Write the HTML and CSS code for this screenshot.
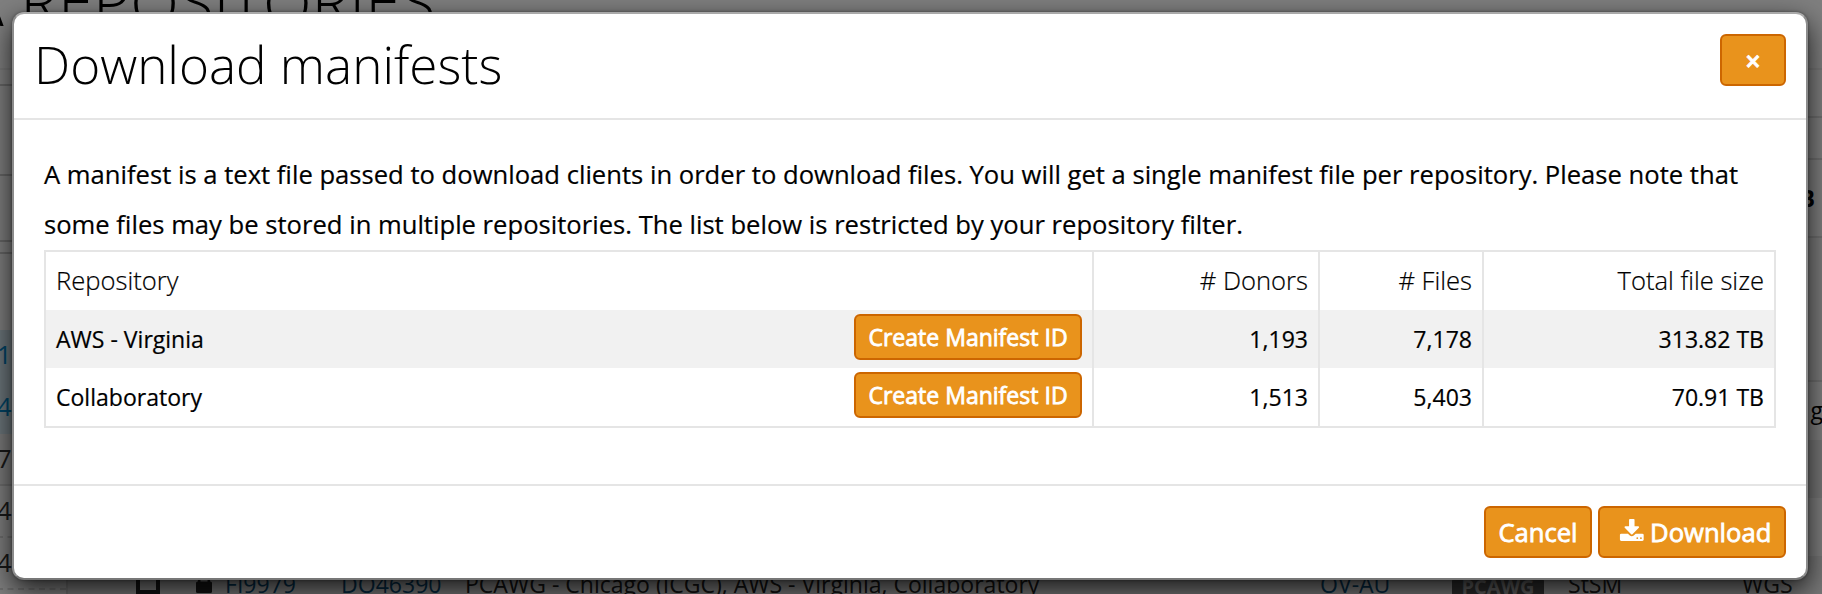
FILE: index.html
```html
<!DOCTYPE html>
<html lang="en">
<head>
<meta charset="utf-8">
<title>Download manifests</title>
<link rel="stylesheet" href="styles.css">
</head>
<body>
<div class="page">
  <h1 class="page-title">DATA REPOSITORIES</h1>
  <div class="page-body">
    <aside class="sidebar">
      <div class="panel panel-a"></div>
      <div class="panel panel-b"></div>
      <div class="panel panel-c"></div>
      <div class="panel panel-d"></div>
      <div class="facet active">1</div>
      <div class="facet active">4</div>
      <div class="facet solid">7</div>
      <div class="facet">4</div>
      <div class="facet">4</div>
    </aside>
    <main class="results">
      <div class="bar bar-a"></div>
      <div class="bar bar-b"></div>
      <div class="bar bar-c"></div>
      <div class="bar bar-d"><b>B</b></div>
      <div class="bar bar-e"></div>
      <div class="bar bar-f">g</div>
      <div class="bar bar-g"></div>
      <div class="bar bar-h"></div>
      <div class="file-row">
        <span class="cell c-check"><i class="checkbox"></i></span>
        <span class="cell c-lock"><svg width="16" height="20" viewBox="0 0 16 20"><path d="M3.2 9V5.500a4.800 4.800 0 0 1 9.600 0V9" fill="none" stroke="#222" stroke-width="2.600"/><rect y="8.500" width="16" height="11.500" rx="1.500" fill="#222"/></svg></span>
        <span class="cell c-file link">FI9979</span>
        <span class="cell c-donor link">DO46390</span>
        <span class="cell c-repo">PCAWG - Chicago (ICGC), AWS - Virginia, Collaboratory</span>
        <span class="cell c-project link">OV-AU</span>
        <span class="cell c-study"><span class="badge">PCAWG</span></span>
        <span class="cell c-type">StSM</span>
        <span class="cell c-strategy">WGS</span>
      </div>
    </main>
  </div>
</div>
<div class="backdrop"></div>
<div class="modal">
  <header class="modal-header">
    <h2 class="modal-title">Download manifests</h2>
    <button class="btn btn-close">×</button>
  </header>
  <section class="modal-body">
    <p class="intro">A manifest is a text file passed to download clients in order to download files. You will get a single manifest file per repository. Please note that some files may be stored in multiple repositories. The list below is restricted by your repository filter.</p>
    <div class="table">
      <div class="row head"><div class="td name">Repository</div><div class="td"># Donors</div><div class="td"># Files</div><div class="td">Total file size</div></div>
      <div class="row striped"><div class="td name">AWS - Virginia<button class="btn btn-small">Create Manifest ID</button></div><div class="td">1,193</div><div class="td">7,178</div><div class="td">313.82 TB</div></div>
      <div class="row"><div class="td name">Collaboratory<button class="btn btn-small">Create Manifest ID</button></div><div class="td">1,513</div><div class="td">5,403</div><div class="td">70.91 TB</div></div>
    </div>
  </section>
  <footer class="modal-footer">
    <button class="btn btn-cancel">Cancel</button>
    <button class="btn btn-download"><svg class="icon" viewBox="0 0 1792 1792"><path fill="currentColor" d="M1344 1344q0-26-19-45t-45-19-45 19-19 45 19 45 45 19 45-19 19-45zm256 0q0-26-19-45t-45-19-45 19-19 45 19 45 45 19 45-19 19-45zm128-224v320q0 40-28 68t-68 28h-1472q-40 0-68-28t-28-68v-320q0-40 28-68t68-28h465l135 136q58 56 136 56t136-56l136-136h464q40 0 68 28t28 68zm-325-569q17 41-14 70l-448 448q-18 19-45 19t-45-19l-448-448q-31-29-14-70 17-39 59-39h256v-448q0-26 19-45t45-19h256q26 0 45 19t19 45v448h256q42 0 59 39z"/></svg><span>Download</span></button>
  </footer>
</div>
</body>
</html>
```
FILE: styles.css
```css
* { box-sizing: border-box; }
html, body { margin: 0; height: 594px; overflow: hidden; }
body { position: relative; font-family: "Open Sans", sans-serif; font-size: 23.04px; color: #000; background: #fff; }

/* page under the dialog */
.page { height: 594px; overflow: hidden; display: flex; flex-direction: column; }
.page-title { margin: -34px 0 0 -151px; height: 102px; flex: none; font-size: 63.6px; font-weight: 300; line-height: 72px; white-space: nowrap; }
.page-body { display: flex; flex: 1; border-top: 2px solid #f0f0f0; }
.sidebar { width: 68px; flex: none; border-right: 2px solid #ddd; }
.panel { border-bottom: 2px solid #ccc; }
.panel-a { height: 16px; }
.panel-b { height: 90px; }
.panel-c { height: 66px; }
.panel-d { height: 12px; margin-bottom: 76px; }
.facet { height: 52px; line-height: 49px; font-size: 25.6px; color: #333; border-bottom: 2px dashed #ddd; margin-left: -3px; }
.facet.active { background: #d9edf7; color: #08c; border-color: #d9edf7; }
.facet.solid { border-bottom-style: solid; background: #f4f4f4; }
.results { flex: 1; min-width: 0; }
.bar { border-bottom: 2px solid #e0e0e0; }
.bar-a { height: 48px; }
.bar-b { height: 42px; }
.bar-c { height: 1px; border: 0; }
.bar-d { height: 77px; line-height: 75px; text-align: right; padding-right: 7px; }
.bar-e { height: 144px; background: #f8f8f8; }
.bar-f { height: 58px; line-height: 57px; text-align: right; border: 0; margin-right: -1px; }
.bar-g { height: 58px; border: 0; background: #eee; }
.bar-h { height: 58px; border: 0; }
.file-row { display: flex; height: 58px; background: #eee; color: #222; line-height: 56px; white-space: nowrap; }
.cell { flex: none; }
.link { color: #08517f; }
.c-check { width: 128px; padding: 13px 0 0 68px; line-height: 0; }
.checkbox { display: block; width: 24px; height: 25px; border: 4px solid #222; }
.c-lock { width: 29px; }
.c-file { width: 116px; }
.c-donor { width: 124px; }
.c-repo { width: 855px; }
.c-project { width: 132px; }
.c-study { width: 116px; }
.c-type { width: 174px; }
.badge { display: inline-block; width: 92px; height: 32px; line-height: 32px; border-radius: 10px; background: #555; color: #bbb; font-size: 20px; font-weight: 700; text-align: center; vertical-align: middle; }
.backdrop { position: absolute; inset: 0; background: rgba(0, 0, 0, .5); }

/* dialog */
.modal { position: absolute; left: 12px; top: 12px; width: 1796px; height: 568px; display: flex; flex-direction: column; background: #fff; border: 2px solid; border-color: #a9a9a9 #8c8c8c #777 #8c8c8c; border-radius: 12px; box-shadow: 0 10px 28px rgba(0, 0, 0, .8), 0 0 3px rgba(0, 0, 0, .4); }
.modal-header { display: flex; justify-content: space-between; height: 106px; flex: none; padding: 20px 20px 0 20px; border-bottom: 2px solid #e5e5e5; }
.modal-title { margin: -6px 0 0; font-size: 51.2px; font-weight: 300; line-height: 72px; }
.btn { font-family: inherit; color: #fff; background: #e9931c; border: 2px solid #cc6600; border-radius: 6px; padding: 0; display: flex; align-items: center; justify-content: center; font-size: 25.6px; font-weight: 400; -webkit-text-stroke: .8px #fff; white-space: nowrap; }
.btn-close { width: 66px; height: 52px; font-weight: 600; font-size: 27px; }
.modal-body { flex: none; height: 364px; padding: 29.5px 30px 0; }
.intro { margin: 0 0 .5px; font-size: 25.62px; line-height: 50px; -webkit-text-stroke: .2px #000; }
.table { border: 2px solid #e5e5e5; }
.row { display: grid; grid-template-columns: 1046px 226px 164px 1fr; height: 58px; -webkit-text-stroke: .2px #000; }
.head { font-size: 25.6px; font-weight: 300; }
.head .td { padding-bottom: 1px; }
.striped { background: #f1f1f1; }
.td { display: flex; align-items: center; justify-content: flex-end; padding: 0 10px; border-left: 2px solid #e5e5e5; }
.td.name { justify-content: space-between; border-left: 0; }
.btn-small { width: 228px; height: 46px; font-size: 23.04px; margin-top: -4px; }
.modal-footer { flex: 1; border-top: 2px solid #e5e5e5; display: flex; justify-content: flex-end; gap: 6px; padding: 20px 20px 0; }
.btn-cancel { width: 108px; height: 52px; }
.btn-download { width: 188px; height: 52px; gap: 5.5px; justify-content: flex-start; padding-left: 19px; }
.icon { width: 25.6px; height: 25.6px; flex: none; }
```
